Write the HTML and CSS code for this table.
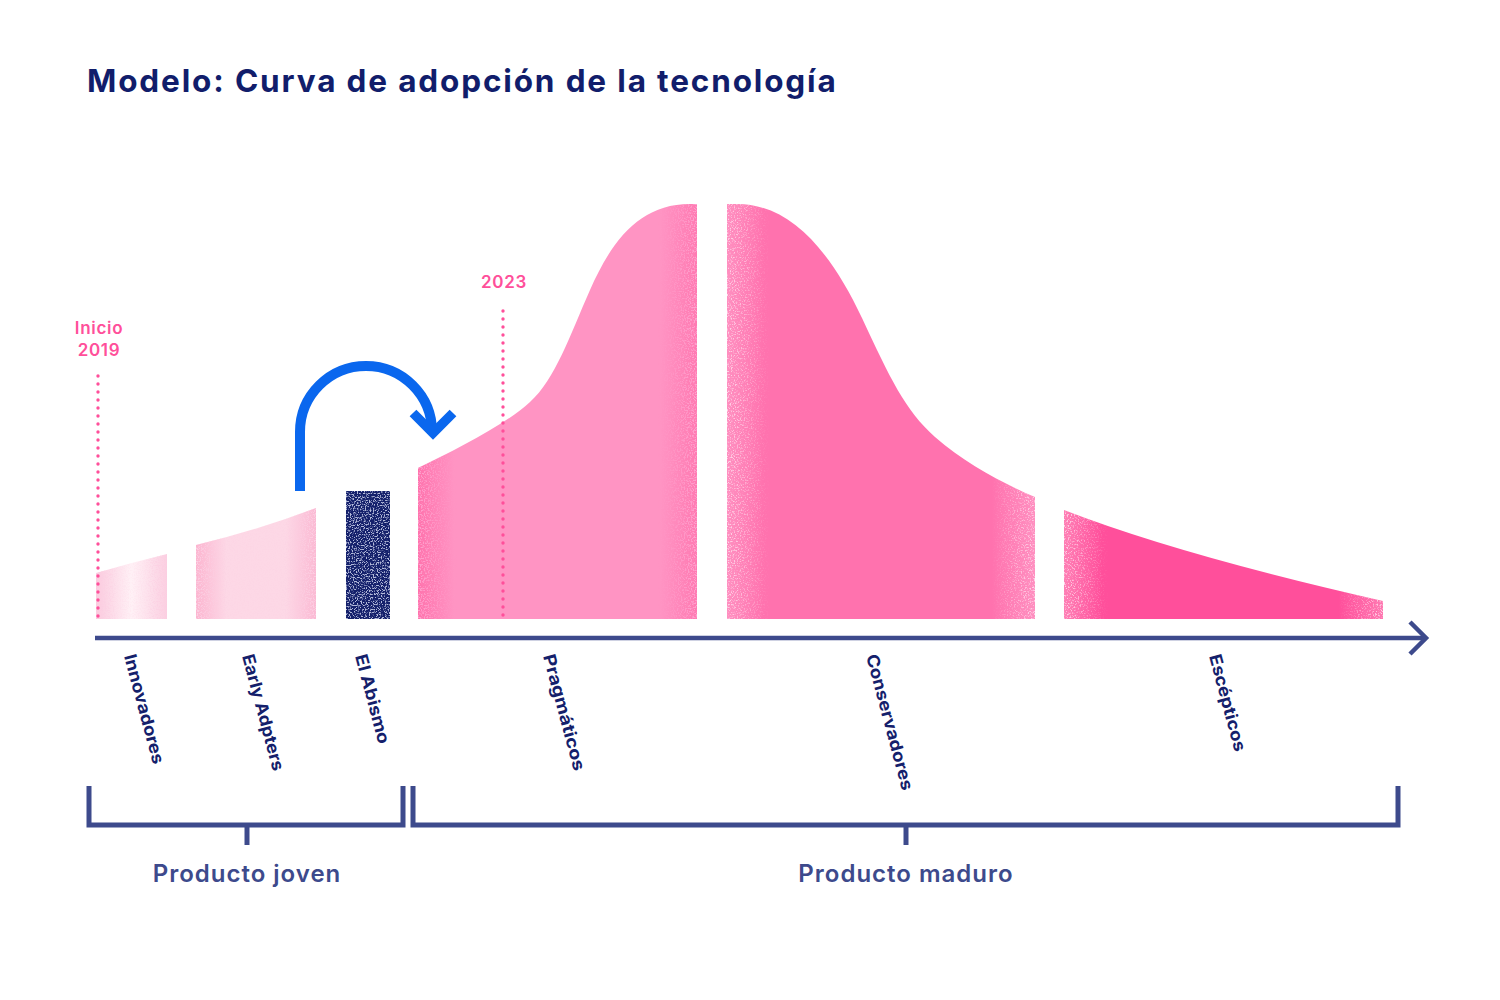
FILE: index.html
```html
<!DOCTYPE html>
<html lang="es">
<head>
<meta charset="utf-8">
<title>Modelo: Curva de adopción de la tecnología</title>
<link rel="stylesheet" href="styles.css">
</head>
<body>
<main class="page">
  <h1 class="title">Modelo: Curva de adopción de la tecnología</h1>
  <svg class="chart" viewBox="0 100 1500 900" width="1500" height="900" xmlns="http://www.w3.org/2000/svg">
    <defs>
      <filter id="nzDark" x="0" y="0" width="1" height="1">
        <feTurbulence type="fractalNoise" baseFrequency="0.7" numOctaves="2" seed="3"/>
        <feColorMatrix type="matrix" values="0 0 0 0 1  0 0 0 0 0.36  0 0 0 0 0.62  6 0 0 0 -2.9"/>
      </filter>
      <filter id="nzLight" x="0" y="0" width="1" height="1">
        <feTurbulence type="fractalNoise" baseFrequency="0.7" numOctaves="2" seed="7"/>
        <feColorMatrix type="matrix" values="0 0 0 0 1  0 0 0 0 0.66  0 0 0 0 0.81  5 0 0 0 -2.6"/>
      </filter>
      <filter id="nzPale" x="0" y="0" width="1" height="1">
        <feTurbulence type="fractalNoise" baseFrequency="0.75" numOctaves="2" seed="11"/>
        <feColorMatrix type="matrix" values="0 0 0 0 0.97  0 0 0 0 0.62  0 0 0 0 0.76  6 0 0 0 -2.9"/>
      </filter>
      <filter id="nzNavy" x="0" y="0" width="1" height="1">
        <feTurbulence type="fractalNoise" baseFrequency="0.75" numOctaves="2" seed="5"/>
        <feColorMatrix type="matrix" values="0 0 0 0 0.45  0 0 0 0 0.49  0 0 0 0 0.70  6 0 0 0 -3.0"/>
      </filter>

      <linearGradient id="fInno" x1="0" x2="1" y1="0" y2="0">
        <stop offset="0" stop-color="#fbcade"/>
        <stop offset="0.5" stop-color="#fff1f6"/>
        <stop offset="1" stop-color="#fbcfe1"/>
      </linearGradient>
      <linearGradient id="fEarly" x1="0" x2="1" y1="0" y2="0">
        <stop offset="0" stop-color="#fcb5d0"/>
        <stop offset="0.25" stop-color="#fdd8e6"/>
        <stop offset="0.75" stop-color="#fdd8e6"/>
        <stop offset="1" stop-color="#fbb9d3"/>
      </linearGradient>
      <linearGradient id="fPrag" x1="0" x2="1" y1="0" y2="0">
        <stop offset="0" stop-color="#ff73ad"/>
        <stop offset="0.13" stop-color="#ff94c3"/>
        <stop offset="0.87" stop-color="#ff94c3"/>
        <stop offset="1" stop-color="#ff7ab2"/>
      </linearGradient>
      <linearGradient id="fCons" x1="0" x2="1" y1="0" y2="0">
        <stop offset="0" stop-color="#ff8fc0"/>
        <stop offset="0.12" stop-color="#ff72ae"/>
        <stop offset="0.86" stop-color="#ff72ae"/>
        <stop offset="1" stop-color="#ff8fc0"/>
      </linearGradient>
      <linearGradient id="fEsc" x1="0" x2="1" y1="0" y2="0">
        <stop offset="0" stop-color="#ff7fb5"/>
        <stop offset="0.12" stop-color="#ff4f9b"/>
        <stop offset="0.86" stop-color="#ff4f9b"/>
        <stop offset="1" stop-color="#ff78b1"/>
      </linearGradient>

      <linearGradient id="mEdge13" x1="0" x2="1" y1="0" y2="0">
        <stop offset="0" stop-color="#fff" stop-opacity="1"/>
        <stop offset="0.14" stop-color="#fff" stop-opacity="0"/>
        <stop offset="0.86" stop-color="#fff" stop-opacity="0"/>
        <stop offset="1" stop-color="#fff" stop-opacity="1"/>
      </linearGradient>
      <linearGradient id="mEdgeWide" x1="0" x2="1" y1="0" y2="0">
        <stop offset="0" stop-color="#fff" stop-opacity="1"/>
        <stop offset="0.3" stop-color="#fff" stop-opacity="0.15"/>
        <stop offset="0.7" stop-color="#fff" stop-opacity="0.15"/>
        <stop offset="1" stop-color="#fff" stop-opacity="1"/>
      </linearGradient>

      <clipPath id="cInno"><path d="M96 619 V573 Q130 563 167 554 V619 Z"/></clipPath>
      <clipPath id="cEarly"><path d="M196 619 V545 Q258 530 316 508 V619 Z"/></clipPath>
      <clipPath id="cPrag"><path d="M418 619 V468 C455 450 505 425 530 402 C555 380 570 335 590 290 C612 240 640 204 690 204 H697 V619 Z"/></clipPath>
      <clipPath id="cCons"><path d="M727 619 V204 H737 C790 204 830 250 862 318 C890 378 905 410 935 437 C965 463 1000 482 1035 497 V619 Z"/></clipPath>
      <clipPath id="cEsc"><path d="M1064 619 V510 Q1180 555 1383 601 V619 Z"/></clipPath>

      <mask id="mInno" maskUnits="userSpaceOnUse" x="90" y="540" width="85" height="85"><rect x="96" y="550" width="71" height="70" fill="url(#mEdgeWide)"/></mask>
      <mask id="mEarly" maskUnits="userSpaceOnUse" x="190" y="500" width="135" height="125"><rect x="196" y="505" width="120" height="115" fill="url(#mEdgeWide)"/></mask>
      <mask id="mPrag" maskUnits="userSpaceOnUse" x="410" y="200" width="295" height="425"><rect x="418" y="204" width="279" height="416" fill="url(#mEdge13)"/></mask>
      <mask id="mCons" maskUnits="userSpaceOnUse" x="720" y="200" width="320" height="425"><rect x="727" y="204" width="308" height="416" fill="url(#mEdge13)"/></mask>
      <mask id="mEsc" maskUnits="userSpaceOnUse" x="1060" y="505" width="330" height="120"><rect x="1064" y="508" width="319" height="112" fill="url(#mEdge13)"/></mask>
    </defs>

    <path d="M96 619 V573 Q130 563 167 554 V619 Z" fill="url(#fInno)"/>
    <g clip-path="url(#cInno)" mask="url(#mInno)"><rect x="96" y="550" width="71" height="70" filter="url(#nzPale)"/></g>

    <path d="M196 619 V545 Q258 530 316 508 V619 Z" fill="url(#fEarly)"/>
    <g clip-path="url(#cEarly)" mask="url(#mEarly)"><rect x="196" y="505" width="120" height="115" filter="url(#nzPale)"/></g>

    <rect class="abismo" x="346" y="491" width="44" height="128"/>
    <rect x="346" y="491" width="44" height="128" filter="url(#nzNavy)"/>

    <path d="M418 619 V468 C455 450 505 425 530 402 C555 380 570 335 590 290 C612 240 640 204 690 204 H697 V619 Z" fill="url(#fPrag)"/>
    <g clip-path="url(#cPrag)" mask="url(#mPrag)"><rect x="418" y="204" width="279" height="416" filter="url(#nzDark)"/></g>

    <path d="M727 619 V204 H737 C790 204 830 250 862 318 C890 378 905 410 935 437 C965 463 1000 482 1035 497 V619 Z" fill="url(#fCons)"/>
    <g clip-path="url(#cCons)" mask="url(#mCons)"><rect x="727" y="204" width="308" height="416" filter="url(#nzLight)"/></g>

    <path d="M1064 619 V510 Q1180 555 1383 601 V619 Z" fill="url(#fEsc)"/>
    <g clip-path="url(#cEsc)" mask="url(#mEsc)"><rect x="1064" y="508" width="319" height="112" filter="url(#nzLight)"/></g>

    <line class="dots" x1="98" y1="376" x2="98" y2="618"/>
    <line class="dots" x1="503" y1="311" x2="503" y2="618"/>
    <text class="milestone" x="99" y="334" text-anchor="middle">Inicio</text>
    <text class="milestone" x="99" y="356" text-anchor="middle">2019</text>
    <text class="milestone" x="504" y="288" text-anchor="middle">2023</text>

    <path class="jump" d="M300 491 V432 A66 66 0 0 1 432 432 V434"/>
    <polyline class="jump-head" points="413,413 433,433 453,413"/>

    <path class="axis" d="M95 638 H1424"/>
    <polyline class="axis" points="1410,622 1426,638 1410,654"/>

    <text class="cat" x="124" y="656" transform="rotate(75 124 656)" textLength="113" lengthAdjust="spacingAndGlyphs">Innovadores</text>
    <text class="cat" x="242" y="656" transform="rotate(75 242 656)" textLength="120" lengthAdjust="spacingAndGlyphs">Early Adpters</text>
    <text class="cat" x="355" y="656" transform="rotate(75 355 656)" textLength="92" lengthAdjust="spacingAndGlyphs">El Abismo</text>
    <text class="cat" x="543" y="656" transform="rotate(75 543 656)" textLength="120" lengthAdjust="spacingAndGlyphs">Pragmáticos</text>
    <text class="cat" x="866" y="656" transform="rotate(75 866 656)" textLength="140" lengthAdjust="spacingAndGlyphs">Conservadores</text>
    <text class="cat" x="1209" y="656" transform="rotate(75 1209 656)" textLength="100" lengthAdjust="spacingAndGlyphs">Escépticos</text>

    <path class="bracket" d="M89 786 V825 H403 V786"/>
    <path class="bracket" d="M247 825 V845"/>
    <path class="bracket" d="M413 786 V825 H1398 V786"/>
    <path class="bracket" d="M906 825 V845"/>
    <text class="group" x="247" y="882" text-anchor="middle">Producto joven</text>
    <text class="group" x="906" y="882" text-anchor="middle">Producto maduro</text>
  </svg>
</main>
</body>
</html>
```

FILE: styles.css
```css
html, body {
  margin: 0;
  padding: 0;
  background: #ffffff;
}

.page {
  width: 1500px;
  height: 1000px;
  overflow: hidden;
  font-family: Inter, "Noto Sans", "Liberation Sans", sans-serif;
}

.title {
  margin: 0;
  padding: 62px 0 0 87px;
  height: 38px;
  line-height: 38px;
  font-size: 31.5px;
  font-weight: 700;
  letter-spacing: 1.85px;
  color: #111d6b;
}

.chart {
  display: block;
}

.abismo {
  fill: #14206b;
}

.dots {
  stroke: #ff4f9a;
  stroke-width: 3.4;
  stroke-linecap: round;
  stroke-dasharray: 0 8;
}

.milestone {
  fill: #ff4f9a;
  font-family: Inter, "Noto Sans", sans-serif;
  font-size: 17px;
  font-weight: 600;
  letter-spacing: 0.7px;
}

.jump {
  fill: none;
  stroke: #0a67ee;
  stroke-width: 10;
}

.jump-head {
  fill: none;
  stroke: #0a67ee;
  stroke-width: 9.5;
  stroke-linejoin: miter;
}

.axis {
  fill: none;
  stroke: #3d4a8c;
  stroke-width: 4.5;
}

.cat {
  fill: #14206b;
  font-family: Inter, "Noto Sans", sans-serif;
  font-size: 17px;
  font-weight: 700;
}

.bracket {
  fill: none;
  stroke: #3d4a8c;
  stroke-width: 5;
  stroke-linejoin: miter;
}

.group {
  fill: #3d4a8c;
  font-family: Inter, "Noto Sans", sans-serif;
  font-size: 24px;
  font-weight: 600;
  letter-spacing: 1px;
}
```
